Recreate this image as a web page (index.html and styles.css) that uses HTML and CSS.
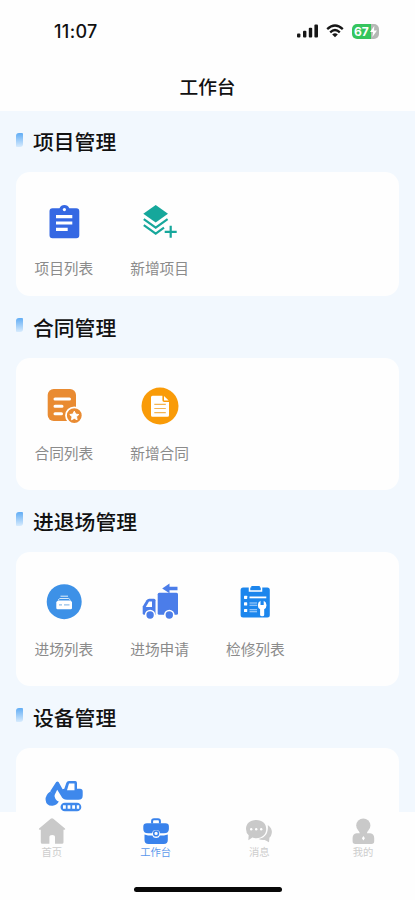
FILE: index.html
```html
<!DOCTYPE html>
<html lang="zh-CN">
<head>
<meta charset="utf-8">
<title>工作台</title>
<link rel="stylesheet" href="styles.css">
</head>
<body>
<div class="app">
  <header class="status">
    <span class="time">11:07</span>
    <div class="indicators">
      <svg class="signal" width="22" height="14" viewBox="0 0 22 14" fill="#161616"><rect x="0" y="9.5" width="3.4" height="4" rx="1"/><rect x="6" y="6.8" width="3.4" height="6.7" rx="1"/><rect x="11.8" y="3.8" width="3.4" height="9.7" rx="1"/><rect x="17.4" y="0.5" width="3.6" height="13" rx="1"/></svg>
      <svg class="wifi" width="18" height="14" viewBox="0 0 18 14" fill="none" stroke="#161616" stroke-width="2.3"><path d="M1.2 5.2Q9-2.2 16.8 5.2"/><path d="M4.2 8.3Q9 3.8 13.8 8.3"/><path d="M9 13.2L6.2 10.4Q9 8.2 11.8 10.4Z" fill="#161616" stroke="none"/></svg>
      <div class="battery"><span>67</span><svg width="7" height="11" viewBox="0 0 7 11" fill="#fff"><path d="M4.3 0L0 6H3L2.4 11L7 4.6H4Z"/></svg></div>
    </div>
  </header>
  <h1 class="navbar">工作台</h1>

  <main class="content">
    <section>
      <h2 class="title-first">项目管理</h2>
      <div class="card card-first">
        <a class="item">
          <svg viewBox="0 0 40 40"><path fill="#3568e3" d="M8.5 6.3H15.5Q17 3 20.4 3T25.3 6.3H32.3Q35.3 6.3 35.3 9.3V33.3Q35.3 36.3 32.3 36.3H8.5Q5.5 36.3 5.5 33.3V9.3Q5.5 6.3 8.5 6.3Z"/><circle cx="20.4" cy="7.6" r="1.6" fill="#fff"/><path d="M12 14.6H28.3M12 21H28.3M12 27.4H23.7" stroke="#fff" stroke-width="3.1"/></svg>
          <span>项目列表</span>
        </a>
        <a class="item">
          <svg viewBox="0 0 40 40" fill="none" stroke="#16a79b" stroke-width="2.2"><path fill="#16a79b" stroke="none" d="M15.7 3L28 11.8L15.7 20.4L3.3 11.8Z"/><path d="M3.8 17.2L15.7 25.6L27.6 17.2"/><path d="M3.8 23.2L15.7 31.6L24 25.7"/><path d="M30.7 23.8V35.8M24.7 29.8H36.7"/></svg>
          <span>新增项目</span>
        </a>
      </div>
    </section>

    <section>
      <h2>合同管理</h2>
      <div class="card card-second">
        <a class="item">
          <svg viewBox="0 0 40 40"><rect x="3.7" y="3" width="28.3" height="32" rx="6" fill="#e98b32"/><path d="M11 13H25.5M11 20.3H18M11 27.7H17.5" stroke="#fff" stroke-width="3" stroke-linecap="round"/><circle cx="30.3" cy="29.6" r="8.3" fill="#e98b32" stroke="#fff" stroke-width="1.8"/><path fill="#fff" stroke="#fff" stroke-linejoin="round" d="M30.3 25.2L31.7 28.1L34.8 28.5L32.5 30.7L33.1 33.8L30.3 32.3L27.5 33.8L28.1 30.7L25.8 28.5L28.9 28.1Z"/></svg>
          <span>合同列表</span>
        </a>
        <a class="item">
          <svg viewBox="0 0 40 40"><circle cx="20" cy="20" r="18.5" fill="#f99b08"/><path fill="#fff" d="M12.5 9.7H22.4V14.2Q22.4 16 24.2 16H29V29.2Q29 30.7 27.5 30.7H12.5Q11 30.7 11 29.2V11.2Q11 9.7 12.5 9.7ZM24 10L28.7 14.6H24Z"/><path d="M14.3 18.3H25.8M14.3 22.5H25.8M14.3 26.7H25.8" stroke="#f4b452" stroke-width="1.2"/></svg>
          <span>新增合同</span>
        </a>
      </div>
    </section>

    <section>
      <h2>进退场管理</h2>
      <div class="card card-third">
        <a class="item">
          <svg viewBox="0 0 40 40"><circle cx="20.2" cy="19.7" r="17.5" fill="#3d91e7"/><path fill="#fff" d="M14 18.5H26.5L28 20V26Q28 27.3 26.7 27.3H13.6Q12.3 27.3 12.3 26V20Z"/><path d="M14 18.2L15.8 16.5H24.8L26.5 18.2" stroke="#d5e8fa" fill="none"/><path d="M16.5 14.2H24" stroke="#d5e8fa" stroke-width="1.1"/><path d="M15 22.8H18M20 22.8H25.5" stroke="#91bfe9" stroke-width="1.2"/></svg>
          <span>进场列表</span>
        </a>
        <a class="item">
          <svg viewBox="0 0 40 40" fill="#4b7de9"><path d="M19.2 10.7H36.5Q38 10.7 38 12.2V31.5Q38 32.7 36.5 32.7H19.2Q17.7 32.7 17.7 31.2V12.2Q17.7 10.7 19.2 10.7Z"/><path d="M22.2 6.5L29.5 1.6V4.7H37.5V8.3H29.5V11.3Z"/><path d="M9.2 16.8H14Q15.5 16.8 15.5 18.3V32.7H3.8Q2.7 32.7 2.7 31.3V24.5L6.5 18.3Q7.5 16.8 9.2 16.8Z"/><path fill="#fff" d="M9 19.5H12V25H5.8Z"/><g stroke="#fff" stroke-width="1.6"><circle cx="10.1" cy="33" r="4.5"/><circle cx="29.3" cy="33" r="4.5"/></g></svg>
          <span>进场申请</span>
        </a>
        <a class="item">
          <svg viewBox="0 0 40 40"><rect x="5.6" y="5.5" width="29.2" height="30" rx="2.5" fill="#1c86ed"/><path d="M14.5 4.5V9H26.5V4.5" stroke="#fff" stroke-width="1.5" fill="none"/><rect x="16.2" y="4" width="8.7" height="4" rx=".7" fill="#1c86ed"/><g fill="#fff"><rect x="9" y="13.7" width="3.2" height="3.2" rx=".6"/><rect x="9" y="20.3" width="3.2" height="3.2" rx=".6"/><rect x="9" y="26.9" width="3.2" height="3.2" rx=".6"/></g><path d="M14.5 15.4H31.3" stroke="#fff" stroke-width="1.8"/><path d="M14.5 21H22M14.5 23.2H22M14.5 27.7H22M14.5 29.8H22" stroke="#b5d8fb" stroke-width="1.1"/><path fill="#fff" d="M25.5 18.8V23H28.7V18.8Q31.5 20.2 31.5 23.2Q31.5 26 29.2 27.2V33Q29.2 34.2 27.2 34.2T25.1 33V27.2Q22.8 26 22.8 23.2Q22.8 20.2 25.5 18.8Z"/></svg>
          <span>检修列表</span>
        </a>
      </div>
    </section>

    <section>
      <h2>设备管理</h2>
      <div class="card card-last">
        <a class="item">
          <svg viewBox="0 0 40 40" fill="#3e88ec"><path d="M6.2 14.2L12.2 5Q13.4 3.8 14.6 5L18.6 12.2L20.3 11.8L22.4 5.8Q23 4.1 25 4.1H31.2Q33 4.1 33 6V11.7H36Q38.7 11.7 38.7 14.4V18.5Q38.7 22.8 34.4 22.8H23Q18.6 22.8 17 18.8L13.2 12.8L10.2 18.8Z"/><path d="M6.3 14.5Q1.2 18 1.6 23Q2.3 29.2 8.6 28.8Q12.8 28.4 14.8 24.6Q10.8 23.6 10.3 17.4Z"/><path fill="#fff" d="M25 6.5H30.5V13.3H23Z"/><rect x="16.5" y="25.7" width="20.8" height="8.6" rx="4.3"/><path stroke="#fff" stroke-width="3.6" stroke-dasharray="2.8 1.8" d="M19 30H35.2"/></svg>
        </a>
      </div>
    </section>
  </main>

  <footer class="footer">
    <nav class="tabs">
      <a class="tab"><svg viewBox="0 0 30 30" fill="#c9c9c9"><path d="M15 1.3Q15.7 1.3 16.3 1.8L28 11.5Q28.8 12.5 27.5 12.8H26.5V25.3Q26.5 26.8 25 26.8H18V20Q18 18 15.2 18T12.4 20V26.8H5.2Q3.8 26.8 3.8 25.3V12.8H2.6Q1.3 12.5 2.1 11.5L13.7 1.8Q14.3 1.3 15 1.3Z"/></svg><span>首页</span></a>
      <a class="tab active"><svg viewBox="0 0 30 30"><path d="M11.1 6.5V4Q11.1 2.2 13 2.2H17Q18.9 2.2 18.9 4V6.5" fill="none" stroke="#3982ec" stroke-width="2"/><path fill="#3982ec" d="M6 6.3H24.4Q27.9 6.3 27.9 9.5V12Q27.9 16.2 23 16.2H19Q18.5 13 15 13T11.2 16.2H7Q2.3 16.2 2.3 12V9.5Q2.3 6.3 6 6.3Z"/><circle cx="15.1" cy="16.4" r="2.4" fill="none" stroke="#3982ec" stroke-width="1.5"/><path fill="#3982ec" d="M3.5 17.5L7 18.5H11.3Q12.2 21 15.1 21T19 18.5H23L26.8 17.5V23Q26.8 27 22.8 27H7.5Q3.5 27 3.5 23Z"/></svg><span>工作台</span></a>
      <a class="tab"><svg viewBox="0 0 30 30"><path fill="#cbcbcb" d="M23.8 8Q28.3 11 27.8 16Q27.5 18.8 25.4 20.8L25 25.2L20.8 22.9Q17.5 23.5 14.5 22Q25 20 23.8 8Z"/><path fill="#c9c9c9" d="M12.2 3.1C18.5 3.1 22.2 6.8 22.2 12.1S18.4 21.2 12.2 21.2Q10 21.2 8.4 20.5L4.3 23.2L4.7 18.3Q2 16 2 12.1C2 6.8 6 3.1 12.2 3.1Z"/><g fill="#fff"><circle cx="7.2" cy="12.2" r="1.2"/><circle cx="12.2" cy="12.2" r="1.2"/><circle cx="17.2" cy="12.2" r="1.2"/></g></svg><span>消息</span></a>
      <a class="tab"><svg viewBox="0 0 30 30"><circle cx="15.3" cy="8.6" r="7.1" fill="#c9c9c9"/><path fill="#c9c9c9" d="M10.8 14H19.8L18.8 16.3H22.3Q26.2 17 26.2 21V24.3Q26.2 27 23.5 27H7.3Q4.6 27 4.6 24.3V21Q4.6 17 8.5 16.3H11.8Z"/><path fill="#fff" d="M15.4 19L16.9 21.2L15.4 23.5L13.9 21.2Z"/></svg><span>我的</span></a>
    </nav>
    <div class="home-indicator"></div>
  </footer>
</div>
</body>
</html>
```

FILE: styles.css
```css
* { box-sizing: border-box; }
body {
  margin: 0;
  font-family: "Noto Sans CJK SC", "Noto Sans", sans-serif;
  color: #111;
}
.app {
  display: flex;
  flex-direction: column;
  height: 900px;
  overflow: hidden;
  background: #fefefe;
}
.status {
  flex: none;
  display: flex;
  align-items: center;
  justify-content: space-between;
  height: 62px;
  padding: 0 36px 0 54px;
}
.time {
  padding-top: 1px;
  font: 500 18px/20px Inter, sans-serif;
  letter-spacing: 0.35px;
}
.indicators { display: flex; align-items: center; }
.wifi { margin: 0 8px 0 7px; }
.battery {
  display: flex;
  align-items: center;
  gap: 1px;
  width: 27px;
  height: 15px;
  padding-left: 2px;
  border-radius: 5px;
  background: linear-gradient(90deg, #35c55d 70%, #b5b8b5 70%);
  color: #fff;
  font: 700 12px/15px Inter, sans-serif;
}
.navbar {
  flex: none;
  margin: 0;
  height: 49px;
  font-size: 18.7px;
  font-weight: 500;
  line-height: 48px;
  text-align: center;
}
.content {
  flex: 1;
  min-height: 0;
  padding: 0 16px;
  overflow: hidden;
  background: #f2f8fe;
}
h2 {
  display: flex;
  align-items: center;
  gap: 10px;
  height: 62px;
  margin: 0;
  padding-bottom: 1px;
  font-size: 20.8px;
  font-weight: 500;
}
.title-first { height: 61px; }
h2::before {
  content: "";
  width: 7px;
  height: 14px;
  margin-top: -3px;
  border-radius: 3px 1px 3px 1px;
  background: linear-gradient(#61adf5, #d7ebfd);
}
.card {
  display: grid;
  grid-template-columns: repeat(4, 1fr);
  align-items: start;
  padding-top: 30px;
  border-radius: 14px;
  background: #fefefe;
}
.card-first { height: 124px; }
.card-second { height: 132px; padding-top: 28px; }
.card-third { height: 134px; }
.card-last { height: 134px; padding-top: 29px; }
.item {
  display: flex;
  flex-direction: column;
  align-items: center;
  gap: 16px;
  color: #8b8b8b;
  font-size: 14.7px;
  line-height: 22px;
}
.card-first .item { gap: 15px; }
.item svg { width: 40px; height: 40px; }
.footer {
  flex: none;
  height: 88px;
  background: #fefefe;
}
.tabs {
  display: grid;
  grid-template-columns: repeat(4, 1fr);
  height: 75px;
  padding-top: 5px;
}
.tab {
  display: flex;
  flex-direction: column;
  align-items: center;
  color: #cdcdcd;
  font-size: 10.3px;
  line-height: 12px;
}
.tab svg { width: 30px; height: 30px; }
.tab span { margin-top: -1px; }
.tab.active { color: #5b98ec; }
.home-indicator {
  width: 148px;
  height: 5px;
  margin: 0 auto;
  border-radius: 3px;
  background: #080808;
}
```
